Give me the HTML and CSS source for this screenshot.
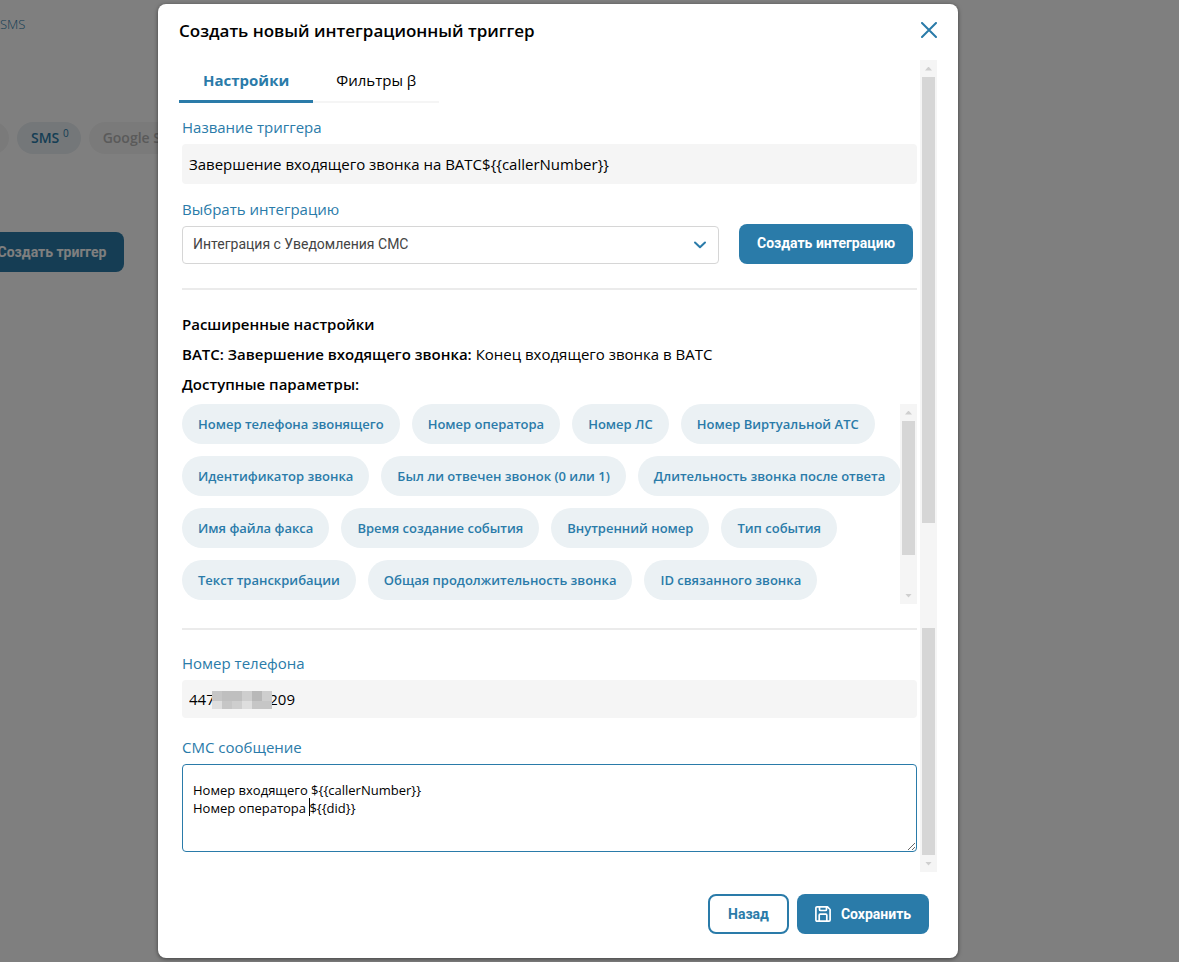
FILE: index.html
```html
<!DOCTYPE html>
<html lang="ru">
<head>
<meta charset="utf-8">
<title>Создать новый интеграционный триггер</title>
<link rel="stylesheet" href="styles.css">
</head>
<body>
<main class="page">
  <a class="crumb" href="#">SMS</a>
  <div class="filters">
    <button class="filter filter-muted" type="button" aria-label="Назад к списку"></button>
    <button class="filter filter-active" type="button">SMS <sup>0</sup></button>
    <button class="filter filter-muted" type="button">Google Sheets</button>
  </div>
  <button class="page-create" type="button">Создать триггер</button>
</main>

<div class="backdrop">
<section class="dialog" role="dialog" aria-labelledby="dialog-title">
  <header class="dialog-head">
    <h1 id="dialog-title">Создать новый интеграционный триггер</h1>
    <button class="close" type="button" aria-label="Закрыть">
      <svg width="16" height="16" viewBox="0 0 16 16" fill="none" stroke="currentColor" stroke-width="2" stroke-linecap="round"><path d="M1 1l14 14M15 1L1 15"/></svg>
    </button>
  </header>

  <div class="dialog-body">
    <form class="content" id="trigger">
      <nav class="tabs">
        <button class="tab tab-active" type="button">Настройки</button>
        <button class="tab" type="button">Фильтры β</button>
      </nav>

      <div class="fields">
        <div class="field field-first">
          <label for="name">Название триггера</label>
          <input class="text-input" id="name" type="text" value="Завершение входящего звонка на ВАТС${{callerNumber}}">
        </div>

        <div class="field-select">
          <label for="integration">Выбрать интеграцию</label>
          <div class="select-row">
            <div class="select-wrap">
              <select id="integration"><option>Интеграция с Уведомления СМС</option></select>
              <svg class="chevron" width="14" height="10" viewBox="0 0 14 10" fill="none" stroke="currentColor" stroke-width="2" stroke-linecap="round" stroke-linejoin="round"><path d="M2 2.500l5 4.800 5-4.800"/></svg>
            </div>
            <button class="btn btn-primary btn-wide" type="button">Создать интеграцию</button>
          </div>
        </div>

        <hr>

        <div class="info">
          <p><b>Расширенные настройки</b></p>
          <p><b>ВАТС: Завершение входящего звонка:</b> Конец входящего звонка в ВАТС</p>
          <p><b>Доступные параметры:</b></p>
        </div>

        <div class="params">
          <div class="chips">
            <div class="chip-row">
              <button class="chip" type="button">Номер телефона звонящего</button>
              <button class="chip" type="button">Номер оператора</button>
              <button class="chip" type="button">Номер ЛС</button>
              <button class="chip" type="button">Номер Виртуальной АТС</button>
            </div>
            <div class="chip-row">
              <button class="chip" type="button">Идентификатор звонка</button>
              <button class="chip" type="button">Был ли отвечен звонок (0 или 1)</button>
              <button class="chip" type="button">Длительность звонка после ответа</button>
            </div>
            <div class="chip-row">
              <button class="chip" type="button">Имя файла факса</button>
              <button class="chip" type="button">Время создание события</button>
              <button class="chip" type="button">Внутренний номер</button>
              <button class="chip" type="button">Тип события</button>
            </div>
            <div class="chip-row">
              <button class="chip" type="button">Текст транскрибации</button>
              <button class="chip" type="button">Общая продолжительность звонка</button>
              <button class="chip" type="button">ID связанного звонка</button>
            </div>
          </div>
          <div class="scrollbar" aria-hidden="true">
            <i class="arrow arrow-up"></i>
            <div class="track"><i class="thumb thumb-params"></i></div>
            <i class="arrow arrow-down"></i>
          </div>
        </div>

        <hr>

        <div class="field field-phone">
          <label for="phone">Номер телефона</label>
          <div class="phone-wrap">
            <input class="text-input input-phone" id="phone" type="text" value="447              209">
            <svg class="mask" width="60" height="18" viewBox="0 0 60 18" shape-rendering="crispEdges" aria-hidden="true">
              <path fill="#c6c6c6" d="M0 0h60v18H0z"/>
              <path fill="#bfbfbf" d="M10 0h20v10H10z"/>
              <path fill="#cecece" d="M30 0h10v10H30zM50 0h10v10H50zM20 10h10v8H20z"/>
              <path fill="#b8b8b8" d="M40 0h10v10H40z"/>
              <path fill="#dedede" d="M0 10h10v8H0zM30 10h10v8H30z"/>
            </svg>
          </div>
        </div>

        <div class="field field-message">
          <label for="message">СМС сообщение</label>
          <div class="message-wrap">
            <textarea id="message" spellcheck="false">Номер входящего ${{callerNumber}}
Номер оператора ${{did}}</textarea>
            <i class="caret"></i>
          </div>
        </div>
      </div>
    </form>

    <div class="scrollbar" aria-hidden="true">
      <i class="arrow arrow-up"></i>
      <div class="track"><i class="thumb thumb-top"></i><i class="thumb thumb-bottom"></i></div>
      <i class="arrow arrow-down"></i>
    </div>
  </div>

  <footer class="dialog-foot">
    <button class="btn btn-outline" type="button">Назад</button>
    <button class="btn btn-primary btn-save" type="submit" form="trigger">
      <svg width="16" height="16" viewBox="0 0 16 16" fill="none" stroke="currentColor" stroke-width="1.700" stroke-linejoin="round"><path d="M.9 2A1.100 1.100 0 0 1 2 .9h10.500l2.600 2.600V14a1.100 1.100 0 0 1-1.100 1.100H2A1.100 1.100 0 0 1 .9 14zM4.500 1v2.500a1 1 0 0 0 1 1h5a1 1 0 0 0 1-1V1M4.200 15V9.200a1 1 0 0 1 1-1h5.600a1 1 0 0 1 1 1V15"/></svg>
      Сохранить
    </button>
  </footer>
</section>
</div>
</body>
</html>
```
FILE: styles.css
```css
:root {
  --blue: #2a7ba9;
  --soft: #f5f5f5;
  --ui: "Open Sans", "Noto Sans", sans-serif;
  --btn: Roboto, sans-serif;
}

* { box-sizing: border-box; }

body {
  margin: 0;
  min-height: 100vh;
  overflow: hidden;
  background: #fff;
  color: #000;
  font: 15px/24px var(--ui);
}

button, input, select, textarea { font: inherit; color: inherit; margin: 0; }
button { border: 0; padding: 0; background: none; white-space: nowrap; cursor: pointer; }
label { display: block; padding-bottom: 2px; color: var(--blue); line-height: 22px; }
svg { display: block; }

/* Page under the dialog */
.page { position: absolute; inset: 0; overflow: hidden; }
.crumb {
  display: block;
  padding-top: 12px;
  color: var(--blue);
  font-size: 13px;
  font-weight: 300;
  text-decoration: none;
}
.filters { display: flex; gap: 8px; margin-top: 86px; }
.filter {
  height: 32px;
  padding: 0 14px;
  border-radius: 16px;
  background: #f5f5f5;
  font-size: 14px;
  font-weight: 600;
  line-height: 32px;
}
.filter:first-child { width: 32px; margin-left: -23px; padding: 0; }
.filter-muted { color: #b4b4b4; }
.filter-active { background: #e9eef2; color: var(--blue); padding: 0 12px 0 14px; }
.filter sup { font-size: 10px; font-weight: 400; line-height: 0; }
.page-create {
  width: 152px;
  height: 40px;
  margin: 78px 0 0 -28px;
  padding-left: 8px;
  border-radius: 8px;
  background: var(--blue);
  color: #fff;
  font: 700 14px/40px var(--btn);
}

/* Dialog */
.backdrop {
  position: relative;
  min-height: 100vh;
  padding: 4px 63px 4px 0;
  background: rgba(0, 0, 0, .5);
}
.dialog {
  max-width: 800px;
  margin: 0 auto;
  padding: 0 21px 24px;
  border-radius: 8px;
  background: #fff;
  box-shadow: 0 1px 4px rgba(0, 0, 0, .5);
}
.dialog-head {
  display: flex;
  align-items: center;
  justify-content: space-between;
  height: 56px;
  padding-bottom: 2px;
}
h1 { margin: 0; font-size: 17px; line-height: 24px; font-weight: 600; }
.close { color: var(--blue); padding-bottom: 2px; }

.dialog-body { display: grid; grid-template-columns: 1fr 17px; }
.content { min-width: 0; }

.tabs { display: flex; align-items: flex-end; }
.tab {
  height: 43px;
  padding: 0 23px;
  border-bottom: 2px solid var(--soft);
  line-height: 41px;
}
.tab-active {
  padding: 0 24px;
  border-bottom: 3px solid var(--blue);
  color: var(--blue);
  font-weight: 700;
}

.fields { padding: 0 3px 20px; }
.field { display: flex; flex-direction: column; gap: 4px; }
.field-first { padding: 13px 0 14px; }
.field-phone { padding: 22px 0 18px; }
.text-input {
  width: 100%;
  height: 40px;
  padding: 0 7px;
  border: 0;
  border-radius: 4px;
  background: var(--soft);
}
.input-phone { height: 38px; white-space: pre; }
.phone-wrap, .message-wrap { position: relative; display: flex; }
.mask { position: absolute; left: 30px; top: 11px; }

.select-row { display: flex; align-items: flex-end; gap: 20px; padding: 2px 4px 24px 0; }
.select-wrap { position: relative; flex: 1; display: flex; }
select {
  width: 100%;
  height: 38px;
  padding: 0 10px 2px;
  border: 1px solid #d6d6d6;
  border-radius: 4px;
  background: #fff;
  color: #444;
  font: 14px/34px var(--btn);
  appearance: none;
}
.chevron { position: absolute; right: 12px; top: 14px; color: var(--blue); }

hr { height: 2px; margin: 0; border: 0; background: #ebebeb; }

.info { padding: 19px 0 5px; line-height: 30px; }
.info p { margin: 0; }
.info b { font-weight: 600; }

.params { display: grid; grid-template-columns: 1fr 17px; height: 200px; margin-bottom: 24px; }
.chips { display: flex; flex-direction: column; gap: 12px; min-width: 0; }
.chip-row { display: flex; gap: 12px; }
.chip {
  height: 40px;
  padding: 0 16px;
  border-radius: 20px;
  background: #ebf1f4;
  color: var(--blue);
  font-size: 13px;
  font-weight: 600;
}

textarea {
  width: 100%;
  height: 88px;
  padding: 16px 10px;
  border: 1px solid var(--blue);
  border-radius: 4px;
  outline: 0;
  background: #fff;
  font-size: 13px;
  line-height: 18px;
  resize: vertical;
}
.caret { position: absolute; left: 127px; top: 34px; width: 1px; height: 18px; background: #000; }

/* Scroll bars */
.scrollbar { display: flex; flex-direction: column; background: var(--soft); }
.arrow { display: grid; place-items: center; height: 17px; }
.arrow::before { content: ""; width: 7px; height: 4px; background: #cfcfcf; }
.arrow-up::before { clip-path: polygon(50% 0, 100% 100%, 0 100%); }
.arrow-down::before { clip-path: polygon(0 0, 100% 0, 50% 100%); }
.track { display: flex; flex: 1; flex-direction: column; justify-content: space-between; padding: 0 2px; }
.thumb { background: #d6d6d6; }
.thumb-params { height: 134px; }
.thumb-top { height: 446px; }
.thumb-bottom { height: 227px; }

/* Buttons */
.dialog-foot { display: flex; justify-content: flex-end; gap: 8px; padding: 22px 8px 0 0; }
.btn { height: 40px; border-radius: 8px; font: 700 14px/40px var(--btn); }
.btn-primary { background: var(--blue); color: #fff; }
.btn-wide { width: 174px; padding-bottom: 2px; line-height: 38px; }
.btn-outline { width: 81px; border: 2px solid var(--blue); color: var(--blue); line-height: 36px; }
.btn-save { display: flex; align-items: center; justify-content: center; gap: 10px; width: 132px; }
```
